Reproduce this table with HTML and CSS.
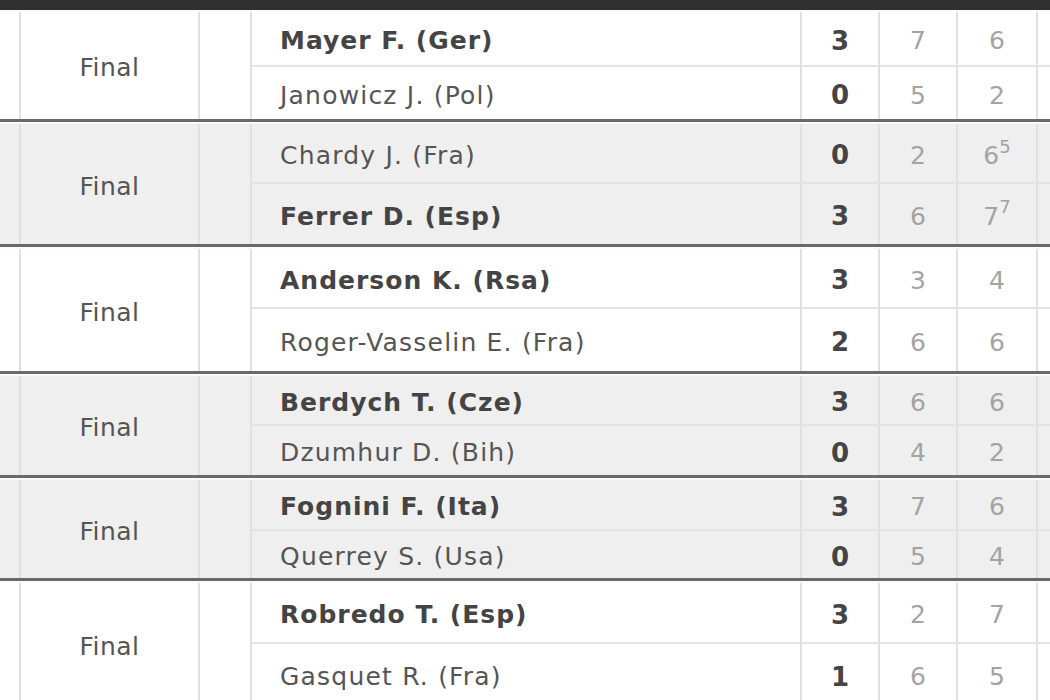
FILE: index.html
```html
<!DOCTYPE html>
<html>
<head>
<meta charset="utf-8">
<link rel="stylesheet" href="styles.css">
</head>
<body>
<div class="topbar"></div>
<div class="results">
  <div class="match m1 white">
    <div class="c0"></div><div class="c1">Final</div><div class="c2"></div>
    <div class="name win r1">Mayer F. (Ger)</div><div class="sets r1">3</div><div class="g r1">7</div><div class="g r1">6</div><div class="x r1"></div>
    <div class="name">Janowicz J. (Pol)</div><div class="sets">0</div><div class="g">5</div><div class="g">2</div><div class="x"></div>
  </div>
  <div class="match m2 grey">
    <div class="c0"></div><div class="c1">Final</div><div class="c2"></div>
    <div class="name r1">Chardy J. (Fra)</div><div class="sets r1">0</div><div class="g r1">2</div><div class="g r1">6<sup>5</sup></div><div class="x r1"></div>
    <div class="name win">Ferrer D. (Esp)</div><div class="sets">3</div><div class="g">6</div><div class="g">7<sup>7</sup></div><div class="x"></div>
  </div>
  <div class="match m3 white">
    <div class="c0"></div><div class="c1">Final</div><div class="c2"></div>
    <div class="name win r1">Anderson K. (Rsa)</div><div class="sets r1">3</div><div class="g r1">3</div><div class="g r1">4</div><div class="x r1"></div>
    <div class="name">Roger-Vasselin E. (Fra)</div><div class="sets">2</div><div class="g">6</div><div class="g">6</div><div class="x"></div>
  </div>
  <div class="match m4 grey">
    <div class="c0"></div><div class="c1">Final</div><div class="c2"></div>
    <div class="name win r1">Berdych T. (Cze)</div><div class="sets r1">3</div><div class="g r1">6</div><div class="g r1">6</div><div class="x r1"></div>
    <div class="name">Dzumhur D. (Bih)</div><div class="sets">0</div><div class="g">4</div><div class="g">2</div><div class="x"></div>
  </div>
  <div class="match m5 grey">
    <div class="c0"></div><div class="c1">Final</div><div class="c2"></div>
    <div class="name win r1">Fognini F. (Ita)</div><div class="sets r1">3</div><div class="g r1">7</div><div class="g r1">6</div><div class="x r1"></div>
    <div class="name">Querrey S. (Usa)</div><div class="sets">0</div><div class="g">5</div><div class="g">4</div><div class="x"></div>
  </div>
  <div class="match m6 white last">
    <div class="c0"></div><div class="c1">Final</div><div class="c2"></div>
    <div class="name win r1">Robredo T. (Esp)</div><div class="sets r1">3</div><div class="g r1">2</div><div class="g r1">7</div><div class="x r1"></div>
    <div class="name">Gasquet R. (Fra)</div><div class="sets">1</div><div class="g">6</div><div class="g">5</div><div class="x"></div>
  </div>
</div>
</body>
</html>
```
FILE: styles.css
```css
* { box-sizing: border-box; }
html, body { margin: 0; padding: 0; }
body {
  width: 1050px;
  height: 700px;
  overflow: hidden;
  background: #fff;
  font-family: "DejaVu Sans", Verdana, sans-serif;
  color: #555;
}
.topbar {
  height: 10px;
  background: #303030;
}
.match {
  display: grid;
  grid-template-columns: 19px 179px 52px 550px 78px 78px 80px 1fr;
  border-top: 2px solid #fbfbf6;
  border-bottom: 3px solid #6a6a6a;
}
.match.last { border-bottom: none; }
.white { background: #fff; }
.grey { background: #efefef; }
.m1 { grid-template-rows: 55px 52px; }
.m2 { grid-template-rows: 60px 60px; }
.m3 { grid-template-rows: 60px 62px; }
.m4 { grid-template-rows: 50px 49px; }
.m5 { grid-template-rows: 51px 47px; }
.m6 { grid-template-rows: 61px 61px; }
.match > div {
  display: flex;
  align-items: center;
  border-left: 2px solid #e0e0e0;
  padding-top: 4px;
}
.match > .c0 { grid-row: span 2; border-left: none; }
.c1, .c2 { grid-row: span 2; }
.c1 {
  justify-content: center;
  font-size: 25px;
  letter-spacing: 0.5px;
  color: #555;
}
.r1 { border-bottom: 2px solid #e4e4e4; }
.name {
  padding-left: 28px;
  font-size: 25px;
  letter-spacing: 1.2px;
  color: #555;
}
.name.win { font-weight: bold; color: #444; letter-spacing: 1px; }
.sets {
  justify-content: center;
  font-size: 26px;
  font-weight: bold;
  color: #444;
}
.g {
  justify-content: center;
  font-size: 25px;
  color: #a3a3a3;
}
.g sup {
  font-size: 18px;
  align-self: flex-start;
  margin-top: 8px;
}
```
